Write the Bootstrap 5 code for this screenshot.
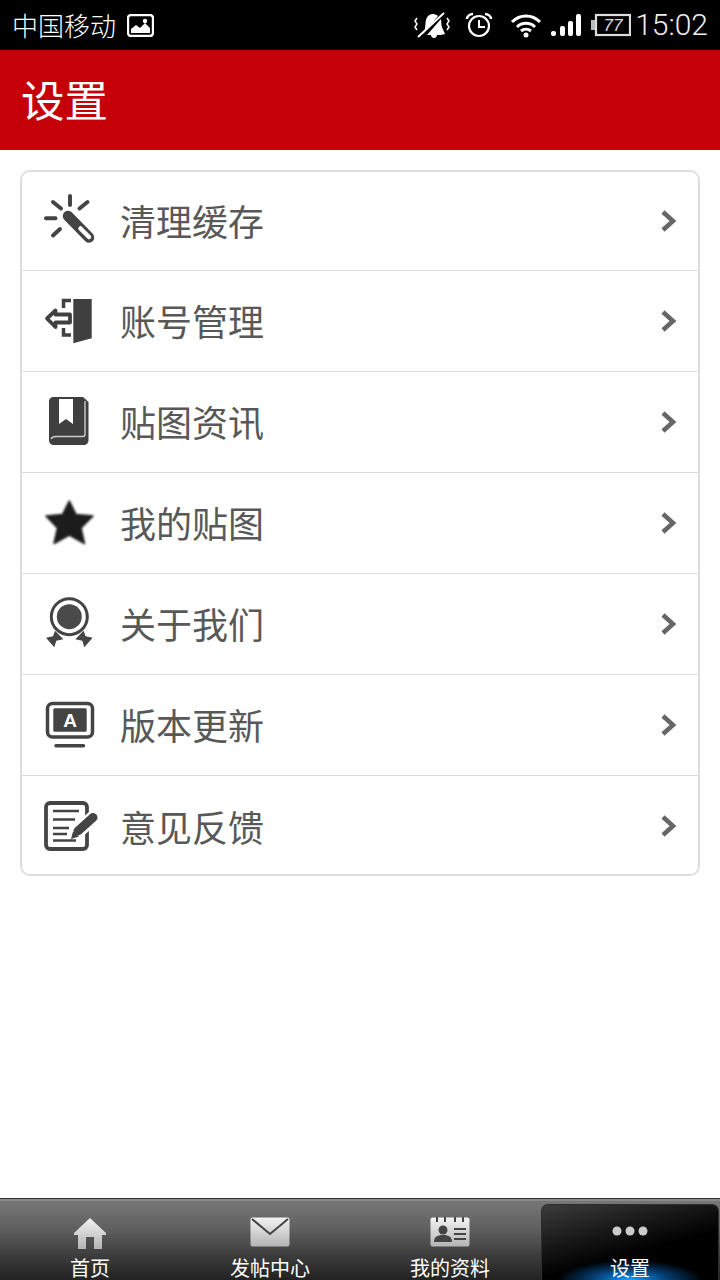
<!DOCTYPE html>
<html lang="zh">
<head>
<meta charset="utf-8">
<title>设置</title>
<link href="https://cdn.jsdelivr.net/npm/bootstrap@5.3.0/dist/css/bootstrap.min.css" rel="stylesheet">
<style>
html,body{height:1280px;overflow:hidden;background:#fff}
body{font-family:"Noto Sans CJK SC","Liberation Sans",sans-serif}
.phone{width:720px;height:1280px}
.sbar{height:50px;background:#000;color:#fff;padding:0 12px 0 12px}
.carrier{font-size:26px;line-height:1;font-weight:300}
.clock{font-family:Roboto,"Liberation Sans",sans-serif;font-weight:300;font-size:30px;line-height:1;color:#eee;margin-left:4px}
.pic-ico{margin-left:11px}
.alarm-ico{margin-left:15px}
.wifi-ico{margin-left:17px}
.sig-ico{margin-left:9px}
.bat-ico{margin-left:9px}
.titlebar{height:100px;background:#c60009;color:#fff;padding:0 0 2px 21px}
.titlebar h1{font-size:43.5px;line-height:1;font-weight:400;margin:0}
.body-area{padding:20px 20px 0}
.menu-card{border:2px solid #ddd;border-radius:10px;overflow:hidden}
.menu-row{height:101px;padding:0 20px 0 20px;border:0;border-bottom:1px solid #ddd;color:#585858;font-size:36px;line-height:1;background:#fff}
.menu-row:first-child{height:99px}
.menu-row:last-child{height:98px;border-bottom:0;padding-top:2px}
.menu-row:last-child .row-label{margin-top:0}
.row-label{margin-top:-2px}
.ico56{width:56px;height:56px;flex:none;margin-right:22px}
.tabbar{height:82px;flex:none;border-top:1px solid #333;background:linear-gradient(#8a8a8a 0,#8a8a8a 2px,#767676 2px,#616161 35%,#3a3a3a 72%,#222 100%)}
.tabcell{width:180px;height:81px;color:#fff;font-size:20px;line-height:1;position:relative}
.tabcell span{position:absolute;left:0;right:0;top:59px;text-align:center}
.tabcell svg{position:absolute}
.tab-on{background:radial-gradient(ellipse 72px 20px at 50% 100%,#1aa4ff 0,#0a6cc0 25%,#053a6b 55%,rgba(0,0,0,0) 100%),linear-gradient(165deg,#3c3c3c 0,#151515 38%,#000 60%);border:1px solid #2e2e2e;border-bottom:0;border-radius:7px 7px 0 0;width:178px;height:76px;margin:5px 1px 0 1px}
.tab-on span{top:53px}
</style>
</head>
<body>
<div class="phone d-flex flex-column">
  <div class="sbar d-flex align-items-center">
    <span class="carrier">中国移动</span>
    <svg class="pic-ico me-auto" width="27" height="23" viewBox="0 0 27 23"><rect x="1" y="1" width="25" height="21" rx="3" fill="#000" stroke="#fff" stroke-width="2.4"/><path d="M4 19V15l5-4 4 3 5-5 5 5v5z" fill="#fff"/><circle cx="18" cy="7" r="2.2" fill="#fff"/></svg>
    <svg width="36" height="30" viewBox="0 0 36 30"><path d="M9 24C12 19 11 13 12 10c1-4 4-6 7-6 2 0 4 1 5 2zM13 25 27 9c.5 2 0 5 1 8 .6 2 2 4 3 7-3 1-6 1-8 1 0 1.500-1 3-3 3s-3-2-3-3z" fill="#fff"/><path d="M4 27 30 3" stroke="#fff" stroke-width="2"/><path d="M3 8 1 11l2 3-2 3 2 3M33 8l2 3-2 3 2 3-2 3" fill="none" stroke="#fff" stroke-width="1.500"/></svg>
    <svg class="alarm-ico" width="28" height="26" viewBox="0 0 28 26"><circle cx="14" cy="14" r="10" fill="none" stroke="#fff" stroke-width="2.2"/><path d="M14 8v7h6" fill="none" stroke="#fff" stroke-width="2"/><path d="M2 7c0-3 3-5 6-5M26 7c0-3-3-5-6-5" fill="none" stroke="#fff" stroke-width="2.4"/></svg>
    <svg class="wifi-ico" width="32" height="25" viewBox="0 0 32 25"><path d="M2 9c8-8 20-8 28 0M7 14c5-5 13-5 18 0M11 18c3-2.500 7-2.500 10 0" fill="none" stroke="#fff" stroke-width="3"/><circle cx="16" cy="22" r="2.500" fill="#fff"/></svg>
    <svg class="sig-ico" width="31" height="24" viewBox="0 0 31 24"><rect x="0" y="18" width="5" height="5" rx="2" fill="#fff"/><rect x="9" y="13" width="5" height="10" rx="2" fill="#fff"/><rect x="17" y="8" width="5" height="15" rx="2" fill="#fff"/><rect x="25" y="1" width="5" height="22" rx="2" fill="#fff"/></svg>
    <svg class="bat-ico" width="40" height="24" viewBox="0 0 40 24"><rect x="5" y="2" width="34" height="20" fill="none" stroke="#ddd" stroke-width="2.200"/><rect x="0" y="7" width="4" height="10" fill="#bbb"/><text x="22" y="18" text-anchor="middle" font-family="Liberation Sans,sans-serif" font-size="17" font-style="italic" fill="#ddd">77</text></svg>
    <span class="clock">15:02</span>
  </div>
  <div class="titlebar d-flex align-items-center"><h1>设置</h1></div>
  <div class="body-area flex-grow-1">
    <div class="card menu-card">
      <div class="list-group list-group-flush">
        <div class="list-group-item menu-row d-flex align-items-center">
          <svg class="ico56" viewBox="0 0 56 56"><g stroke="#444" stroke-width="4" stroke-linecap="round"><path d="M28 3v9M11 9l8 6.500M45.500 9l-8 6.500M4 25.300h9.500M11 42.500l7-6.500"/></g><path d="M26 23 47 44.500" stroke="#444" stroke-width="10.500" stroke-linecap="round"/><path d="M38.500 35.500l8.500 8.500" stroke="#fff" stroke-width="4.500" stroke-linecap="round"/></svg>
          <span class="row-label">清理缓存</span>
          <svg class="ms-auto" width="18" height="24" viewBox="0 0 18 24"><path d="M3 3l10 9-10 9" fill="none" stroke="#666" stroke-width="4.500"/></svg>
        </div>
        <div class="list-group-item menu-row d-flex align-items-center">
          <svg class="ico56" viewBox="0 0 56 56"><path d="M31.300 6h18.400v39.300l-18.400 5z" fill="#404040"/><path d="M29 7.500h-7.500V15M21.500 35v7H29" fill="none" stroke="#404040" stroke-width="3.500"/><path d="M5 25.500 13.500 17.500V21.500h14.500v8H13.500v4.500z" fill="#fff" stroke="#404040" stroke-width="3.800" stroke-linejoin="round"/></svg>
          <span class="row-label">账号管理</span>
          <svg class="ms-auto" width="18" height="24" viewBox="0 0 18 24"><path d="M3 3l10 9-10 9" fill="none" stroke="#666" stroke-width="4.500"/></svg>
        </div>
        <div class="list-group-item menu-row d-flex align-items-center">
          <svg class="ico56" viewBox="0 0 56 56"><path d="M11 3h30l5.500 5v38c0 3-2 5-5 5H12c-3 0-5-2-5-5V7c0-2 2-4 4-4z" fill="#3f3f3f"/><path d="M17 5h14v25l-7-5-7 5z" fill="#fff"/><path d="M9 45c1-2 3-2.500 5-2.500h27c1 0 2-1 2-2.500V7" fill="none" stroke="#ccc" stroke-width="1.400"/></svg>
          <span class="row-label">贴图资讯</span>
          <svg class="ms-auto" width="18" height="24" viewBox="0 0 18 24"><path d="M3 3l10 9-10 9" fill="none" stroke="#666" stroke-width="4.500"/></svg>
        </div>
        <div class="list-group-item menu-row d-flex align-items-center">
          <svg class="ico56" viewBox="0 0 56 56"><defs><filter id="soft" x="-10%" y="-10%" width="120%" height="120%"><feGaussianBlur stdDeviation="1.300"/></filter></defs><path d="M27.300 6 34 19.500l17 1.500-12 12 3.500 15.500-15.200-8.500-15.300 8.500L15.500 33 4 21l16.500-1.500z" fill="#1c1c1c" stroke="#1c1c1c" stroke-width="1.500" stroke-linejoin="round" filter="url(#soft)"/></svg>
          <span class="row-label">我的贴图</span>
          <svg class="ms-auto" width="18" height="24" viewBox="0 0 18 24"><path d="M3 3l10 9-10 9" fill="none" stroke="#666" stroke-width="4.500"/></svg>
        </div>
        <div class="list-group-item menu-row d-flex align-items-center">
          <svg class="ico56" viewBox="0 0 56 56"><circle cx="27.300" cy="20.700" r="18" fill="#fff" stroke="#444" stroke-width="3"/><circle cx="27.300" cy="20.700" r="12.500" fill="#4a4a4a"/><path d="M12.300 51.300 4 41.700l7-1.500 2-5.500 8.300 8.600-7 1.400z" fill="#444"/><path d="M42.300 51.300 50.600 41.700l-7-1.500-2-5.500-8.300 8.600 7 1.400z" fill="#444"/></svg>
          <span class="row-label">关于我们</span>
          <svg class="ms-auto" width="18" height="24" viewBox="0 0 18 24"><path d="M3 3l10 9-10 9" fill="none" stroke="#666" stroke-width="4.500"/></svg>
        </div>
        <div class="list-group-item menu-row d-flex align-items-center">
          <svg class="ico56" viewBox="0 0 56 56"><rect x="5.500" y="6.500" width="45" height="33.500" rx="5" fill="#fff" stroke="#444" stroke-width="3.500"/><rect x="11.300" y="11.300" width="33.400" height="23.400" rx="1.500" fill="#444"/><text x="28" y="30" text-anchor="middle" font-family="Liberation Sans,sans-serif" font-weight="700" font-size="19" fill="#fff">A</text><path d="M14 48.700h27.500" stroke="#444" stroke-width="3.500" stroke-linecap="round"/></svg>
          <span class="row-label">版本更新</span>
          <svg class="ms-auto" width="18" height="24" viewBox="0 0 18 24"><path d="M3 3l10 9-10 9" fill="none" stroke="#666" stroke-width="4.500"/></svg>
        </div>
        <div class="list-group-item menu-row d-flex align-items-center">
          <svg class="ico56" viewBox="0 0 56 56"><rect x="4" y="5" width="41" height="46" rx="4" fill="#fff" stroke="#444" stroke-width="3.800"/><path d="M11 13h26M11 21.500h22M11 30h16M11 42.500h23M11 36h14" stroke="#444" stroke-width="2.400"/><path d="M53 18 33 36" stroke="#fff" stroke-width="14"/><path d="M51 19.500 36 33" stroke="#444" stroke-width="9" stroke-linecap="round"/><path d="M31 33.500l6 5-8 2.500z" fill="#444"/></svg>
          <span class="row-label">意见反馈</span>
          <svg class="ms-auto" width="18" height="24" viewBox="0 0 18 24"><path d="M3 3l10 9-10 9" fill="none" stroke="#666" stroke-width="4.500"/></svg>
        </div>
      </div>
    </div>
  </div>
  <nav class="tabbar d-flex">
    <svg width="0" height="0" class="position-absolute"><defs><linearGradient id="ig" x1="0" y1="0" x2="0" y2="1"><stop offset="0" stop-color="#f2f2f2"/><stop offset="1" stop-color="#b4b4b4"/></linearGradient></defs></svg>
    <div class="tabcell">
      <svg style="left:73px;top:18px" width="34" height="32" viewBox="0 0 34 32"><path d="M17 1 33 16v2h-4v14h-8V20h-8v12H5V18H1v-2z" fill="url(#ig)"/></svg>
      <span>首页</span>
    </div>
    <div class="tabcell">
      <svg style="left:70px;top:18px" width="40" height="30" viewBox="0 0 40 30"><rect x="0.500" y="0.500" width="39" height="29" rx="2" fill="url(#ig)"/><path d="M2 2 20 17 38 2" fill="none" stroke="#444" stroke-width="2"/></svg>
      <span>发帖中心</span>
    </div>
    <div class="tabcell">
      <svg style="left:70px;top:18px" width="40" height="30" viewBox="0 0 40 30"><rect x="0.500" y="0.500" width="39" height="29" rx="2" fill="url(#ig)"/><path d="M7 0v5M15 0v5M25 0v5M33 0v5" stroke="#444" stroke-width="2"/><circle cx="13" cy="13" r="4.500" fill="#444"/><path d="M4 25c0-5 3-7 9-7s9 2 9 7z" fill="#444"/><path d="M24 12h12M24 17h12M24 22h12" stroke="#444" stroke-width="2"/></svg>
      <span>我的资料</span>
    </div>
    <div class="tabcell tab-on">
      <svg style="left:70px;top:21px" width="36" height="10" viewBox="0 0 36 10"><circle cx="5" cy="5" r="4.500" fill="#ccc"/><circle cx="18" cy="5" r="4.500" fill="#ccc"/><circle cx="31" cy="5" r="4.500" fill="#ccc"/></svg>
      <span>设置</span>
    </div>
  </nav>
</div>
</body>
</html>
